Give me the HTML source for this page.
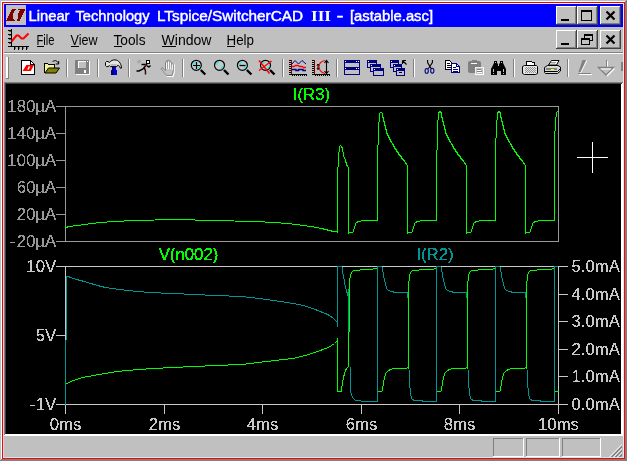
<!DOCTYPE html>
<html><head><meta charset="utf-8"><title>LTspice</title>
<style>
html,body{margin:0;padding:0;background:#C0C0C0;overflow:hidden}
svg{display:block;font-family:"Liberation Sans",sans-serif;will-change:transform}
</style></head><body>
<svg width="627" height="461" viewBox="0 0 627 461" shape-rendering="crispEdges">
<defs><filter id="na" x="-5%" y="-20%" width="110%" height="140%" color-interpolation-filters="sRGB"><feComponentTransfer><feFuncA type="discrete" tableValues="0 0 1 1 1"/></feComponentTransfer></filter><filter id="nb" x="-5%" y="-20%" width="110%" height="140%" color-interpolation-filters="sRGB"><feComponentTransfer><feFuncA type="discrete" tableValues="0 0 0 1 1 1 1 1 1 1"/></feComponentTransfer></filter></defs>
<rect x="0" y="0" width="627" height="461" fill="#C0C0C0"/>
<rect x="0" y="0" width="1" height="461" fill="#C0C0C0"/>
<rect x="0" y="0" width="627" height="1" fill="#C0C0C0"/>
<rect x="1" y="1" width="1" height="459" fill="#FFFFFF"/>
<rect x="1" y="1" width="625" height="1" fill="#FFFFFF"/>
<rect x="626" y="0" width="1" height="461" fill="#808080"/>
<rect x="0" y="460" width="627" height="1" fill="#808080"/>
<rect x="625" y="1" width="1" height="459" fill="#808080"/>
<rect x="1" y="459" width="625" height="1" fill="#808080"/>
<rect x="2" y="2" width="623" height="1" fill="#FF0000"/>
<rect x="2" y="458" width="623" height="1" fill="#FF0000"/>
<rect x="2" y="2" width="1" height="457" fill="#FF0000"/>
<rect x="624" y="2" width="1" height="457" fill="#FF0000"/>
<rect x="3" y="3" width="621" height="1" fill="#E8F0F0"/>
<rect x="3" y="3" width="1" height="455" fill="#D0DCDC"/>
<rect x="623" y="3" width="1" height="455" fill="#E8E8E8"/>
<rect x="3" y="457" width="621" height="1" fill="#E0E0E0"/>
<rect x="4" y="4" width="619" height="23" fill="#0000FF"/>
<rect x="6" y="5" width="20" height="20" fill="#C0C0C0"/>
<path d="M12.3,8.5 H16.3 L14.2,11.7 Q12.3,15 12.9,18.2 L14.4,19.5 L15.6,21.2 H5.8 Z" fill="#800000"/>
<path d="M17.9,8.5 H26 L19.5,21.2 H16.4 L18.3,18.2 Q17.4,15 18.7,12.6 L19.9,10.4 H17.9 Z" fill="#800000"/>
<text x="28.5" y="21" fill="#FFFFFF" font-size="14.5" font-weight="normal" textLength="41" lengthAdjust="spacingAndGlyphs" stroke="#FFFFFF" stroke-width="0.45">Linear</text>
<text x="75.5" y="21" fill="#FFFFFF" font-size="14.5" font-weight="normal" textLength="74" lengthAdjust="spacingAndGlyphs" stroke="#FFFFFF" stroke-width="0.45">Technology</text>
<text x="157" y="21" fill="#FFFFFF" font-size="14.5" font-weight="normal" textLength="146" lengthAdjust="spacingAndGlyphs" stroke="#FFFFFF" stroke-width="0.45">LTspice/SwitcherCAD</text>
<text x="336.5" y="21" fill="#FFFFFF" font-size="14.5" font-weight="normal" textLength="7" lengthAdjust="spacingAndGlyphs" stroke="#FFFFFF" stroke-width="0.45">-</text>
<text x="350" y="21" fill="#FFFFFF" font-size="14.5" font-weight="normal" textLength="83" lengthAdjust="spacingAndGlyphs" stroke="#FFFFFF" stroke-width="0.45">[astable.asc]</text>
<text x="311" y="21" fill="#FFFFFF" font-size="14.5" font-weight="bold" textLength="20" lengthAdjust="spacingAndGlyphs" font-family="Liberation Serif,serif">III</text>
<rect x="556" y="6" width="21" height="19" fill="#C0C0C0"/>
<rect x="556" y="6" width="20" height="1" fill="#FFFFFF"/>
<rect x="556" y="6" width="1" height="18" fill="#FFFFFF"/>
<rect x="556" y="24" width="21" height="1" fill="#404040"/>
<rect x="576" y="6" width="1" height="19" fill="#404040"/>
<rect x="557" y="23" width="19" height="1" fill="#808080"/>
<rect x="575" y="7" width="1" height="17" fill="#808080"/>
<rect x="561" y="19" width="8" height="2" fill="#000"/>
<rect x="577" y="6" width="21" height="19" fill="#C0C0C0"/>
<rect x="577" y="6" width="20" height="1" fill="#FFFFFF"/>
<rect x="577" y="6" width="1" height="18" fill="#FFFFFF"/>
<rect x="577" y="24" width="21" height="1" fill="#404040"/>
<rect x="597" y="6" width="1" height="19" fill="#404040"/>
<rect x="578" y="23" width="19" height="1" fill="#808080"/>
<rect x="596" y="7" width="1" height="17" fill="#808080"/>
<rect x="581" y="10" width="11" height="11" fill="#000"/>
<rect x="582" y="12" width="9" height="8" fill="#C0C0C0"/>
<rect x="600" y="6" width="21" height="19" fill="#C0C0C0"/>
<rect x="600" y="6" width="20" height="1" fill="#FFFFFF"/>
<rect x="600" y="6" width="1" height="18" fill="#FFFFFF"/>
<rect x="600" y="24" width="21" height="1" fill="#404040"/>
<rect x="620" y="6" width="1" height="19" fill="#404040"/>
<rect x="601" y="23" width="19" height="1" fill="#808080"/>
<rect x="619" y="7" width="1" height="17" fill="#808080"/>
<path d="M606.5,11.5 L614.5,19.5 M614.5,11.5 L606.5,19.5" stroke="#000" stroke-width="2.2" fill="none" shape-rendering="auto"/>
<rect x="556" y="30" width="21" height="19" fill="#C0C0C0"/>
<rect x="556" y="30" width="20" height="1" fill="#FFFFFF"/>
<rect x="556" y="30" width="1" height="18" fill="#FFFFFF"/>
<rect x="556" y="48" width="21" height="1" fill="#404040"/>
<rect x="576" y="30" width="1" height="19" fill="#404040"/>
<rect x="557" y="47" width="19" height="1" fill="#808080"/>
<rect x="575" y="31" width="1" height="17" fill="#808080"/>
<rect x="561" y="43" width="8" height="2" fill="#000"/>
<rect x="577" y="30" width="21" height="19" fill="#C0C0C0"/>
<rect x="577" y="30" width="20" height="1" fill="#FFFFFF"/>
<rect x="577" y="30" width="1" height="18" fill="#FFFFFF"/>
<rect x="577" y="48" width="21" height="1" fill="#404040"/>
<rect x="597" y="30" width="1" height="19" fill="#404040"/>
<rect x="578" y="47" width="19" height="1" fill="#808080"/>
<rect x="596" y="31" width="1" height="17" fill="#808080"/>
<rect x="584" y="34" width="9" height="7" fill="#000"/>
<rect x="585" y="36" width="7" height="4" fill="#C0C0C0"/>
<rect x="581" y="38" width="9" height="7" fill="#000"/>
<rect x="582" y="40" width="7" height="4" fill="#C0C0C0"/>
<rect x="600" y="30" width="21" height="19" fill="#C0C0C0"/>
<rect x="600" y="30" width="20" height="1" fill="#FFFFFF"/>
<rect x="600" y="30" width="1" height="18" fill="#FFFFFF"/>
<rect x="600" y="48" width="21" height="1" fill="#404040"/>
<rect x="620" y="30" width="1" height="19" fill="#404040"/>
<rect x="601" y="47" width="19" height="1" fill="#808080"/>
<rect x="619" y="31" width="1" height="17" fill="#808080"/>
<path d="M606.5,35.5 L614.5,43.5 M614.5,35.5 L606.5,43.5" stroke="#000" stroke-width="2.2" fill="none" shape-rendering="auto"/>
<rect x="8" y="30" width="3" height="1" fill="#000"/>
<rect x="9" y="31" width="2" height="1" fill="#606060"/>
<rect x="8" y="34" width="3" height="1" fill="#000"/>
<rect x="9" y="35" width="2" height="1" fill="#606060"/>
<rect x="8" y="38" width="3" height="1" fill="#000"/>
<rect x="9" y="39" width="2" height="1" fill="#606060"/>
<rect x="8" y="42" width="3" height="1" fill="#000"/>
<rect x="9" y="43" width="2" height="1" fill="#606060"/>
<rect x="11" y="29" width="1" height="18" fill="#000"/>
<rect x="8" y="46" width="21" height="1" fill="#000"/>
<rect x="14" y="47" width="1" height="3" fill="#000"/>
<rect x="15" y="47" width="1" height="2" fill="#707070"/>
<rect x="18" y="47" width="1" height="3" fill="#000"/>
<rect x="19" y="47" width="1" height="2" fill="#707070"/>
<rect x="22" y="47" width="1" height="3" fill="#000"/>
<rect x="23" y="47" width="1" height="2" fill="#707070"/>
<rect x="26" y="47" width="1" height="3" fill="#000"/>
<rect x="27" y="47" width="1" height="2" fill="#707070"/>
<polyline points="11.5,41.5 16.5,35.5 18.5,35.5 21.5,38.5 23.5,38.5 28.5,33.5" fill="none" stroke="#FF0000" stroke-width="2" shape-rendering="auto"/>
<text x="36.5" y="45" fill="#000" font-size="14.5" font-weight="normal" textLength="18" lengthAdjust="spacingAndGlyphs">File</text>
<rect x="37" y="46" width="7" height="1" fill="#000"/>
<text x="70.5" y="45" fill="#000" font-size="14.5" font-weight="normal" textLength="27" lengthAdjust="spacingAndGlyphs">View</text>
<rect x="71" y="46" width="8" height="1" fill="#000"/>
<text x="113.5" y="45" fill="#000" font-size="14.5" font-weight="normal" textLength="32" lengthAdjust="spacingAndGlyphs">Tools</text>
<rect x="114" y="46" width="8" height="1" fill="#000"/>
<text x="161.5" y="45" fill="#000" font-size="14.5" font-weight="normal" textLength="50" lengthAdjust="spacingAndGlyphs">Window</text>
<rect x="162" y="46" width="14" height="1" fill="#000"/>
<text x="226.5" y="45" fill="#000" font-size="14.5" font-weight="normal" textLength="27.5" lengthAdjust="spacingAndGlyphs">Help</text>
<rect x="227" y="46" width="8" height="1" fill="#000"/>
<rect x="4" y="52" width="619" height="1" fill="#808080"/>
<rect x="4" y="53" width="619" height="1" fill="#FFFFFF"/>
<rect x="6" y="57" width="1" height="21" fill="#FFFFFF"/>
<rect x="7" y="57" width="1" height="21" fill="#FFFFFF"/>
<rect x="8" y="57" width="1" height="22" fill="#808080"/>
<rect x="6" y="78" width="3" height="1" fill="#808080"/>
<rect x="66" y="59" width="1" height="18" fill="#808080"/>
<rect x="67" y="59" width="1" height="18" fill="#FFFFFF"/>
<rect x="97" y="59" width="1" height="18" fill="#808080"/>
<rect x="98" y="59" width="1" height="18" fill="#FFFFFF"/>
<rect x="128" y="59" width="1" height="18" fill="#808080"/>
<rect x="129" y="59" width="1" height="18" fill="#FFFFFF"/>
<rect x="182" y="59" width="1" height="18" fill="#808080"/>
<rect x="183" y="59" width="1" height="18" fill="#FFFFFF"/>
<rect x="282" y="59" width="1" height="18" fill="#808080"/>
<rect x="283" y="59" width="1" height="18" fill="#FFFFFF"/>
<rect x="336" y="59" width="1" height="18" fill="#808080"/>
<rect x="337" y="59" width="1" height="18" fill="#FFFFFF"/>
<rect x="413" y="59" width="1" height="18" fill="#808080"/>
<rect x="414" y="59" width="1" height="18" fill="#FFFFFF"/>
<rect x="513" y="59" width="1" height="18" fill="#808080"/>
<rect x="514" y="59" width="1" height="18" fill="#FFFFFF"/>
<rect x="567" y="59" width="1" height="18" fill="#808080"/>
<rect x="568" y="59" width="1" height="18" fill="#FFFFFF"/>
<path d="M21.5,60.5 H30.5 L34.5,64.5 V74.5 H21.5 Z" stroke="#000" stroke-width="1" fill="#FFF"/>
<path d="M30.5,60.5 V64.5 H34.5" stroke="#000" stroke-width="1" fill="none"/>
<path d="M26.3,65 H34 L30.8,71 H22.6 Z M28.6,66.6 L27.2,69.4 H28.8 L30.2,66.6 Z" fill="#FF0000" fill-rule="evenodd" shape-rendering="auto"/>
<path d="M44.5,72.5 V63.5 H47.5 L48.5,64.5 H54.5 V67.5" stroke="#000" stroke-width="1" fill="#F4F4A0"/>
<polygon points="45,73 56,73 59.5,68 48.5,68" fill="#808000" stroke="#000" stroke-width="1" shape-rendering="auto"/>
<path d="M52.5,62 C54,60 57,60 58.5,63.5 M58.7,61 V64 H55.7" stroke="#000" stroke-width="1" fill="none" shape-rendering="auto"/>
<rect x="76" y="61" width="14" height="14" fill="#FFF"/>
<rect x="75" y="60" width="14" height="14" fill="#808080"/>
<rect x="78" y="61" width="8" height="7" fill="#FFF"/>
<rect x="79" y="62" width="7" height="6" fill="#C0C0C0"/>
<rect x="84" y="70" width="2" height="3" fill="#FFF"/>
<rect x="87" y="61" width="1" height="1" fill="#FFF"/>
<path d="M105.5,62.5 L106.5,61.5 H108 L109.5,62.5 C111,60.4 113,59.9 115,59.9 C118.5,60 121,63 121.6,68 L120.3,68.2 C120,66.5 119,65.3 117.8,65.2 L116.8,66.6 H110.5 L109.5,65.6 L108,66.6 H106.5 L105.5,65.6 Z" fill="#E4E4E4" stroke="#000" stroke-width="1" shape-rendering="auto"/>
<path d="M110.5,65 H116.5" stroke="#909090" stroke-width="1" fill="none" shape-rendering="auto"/>
<rect x="112" y="67" width="2" height="4" fill="#000080"/>
<rect x="114" y="67" width="2" height="4" fill="#0000E0"/>
<rect x="111" y="70" width="3" height="5" fill="#000080"/>
<rect x="114" y="70" width="3" height="5" fill="#0000E0"/>
<rect x="146" y="60" width="4" height="4" fill="#000"/>
<rect x="147" y="61" width="2" height="2" fill="#FFF"/>
<path d="M147,64 L143,69 L139,71 H136.5 M144.5,68 L145.5,71 V74.5 M141.5,64.5 H145.5 M147,66 L149,67 L150.5,65.5" stroke="#000" stroke-width="1.4" fill="none" shape-rendering="auto"/>
<path d="M145.7,63.5 V66.5 M145.4,71.5 V73.5" stroke="#B00000" stroke-width="0.8" fill="none" shape-rendering="auto"/>
<path d="M137,61.5 L140,63 M138.5,60 L141,61.5" stroke="#909090" stroke-width="1" fill="none" shape-rendering="auto"/>
<path d="M166.5,75.5 L161.5,69.5 C160.5,68 162,67.3 163,68.3 L165.5,70.5 V62.5 C165.5,61 167.2,61 167.2,62.5 V61 C167.4,59.6 169.2,59.6 169.2,61 V61.8 C169.5,60.5 171.2,60.5 171.2,62 V63.5 C171.6,62.4 173.2,62.6 173.2,64 V71.5 L172,75.5 Z" transform="translate(1,1)" fill="none" stroke="#FFF" stroke-width="1.2" shape-rendering="auto"/>
<path d="M166.5,75.5 L161.5,69.5 C160.5,68 162,67.3 163,68.3 L165.5,70.5 V62.5 C165.5,61 167.2,61 167.2,62.5 V61 C167.4,59.6 169.2,59.6 169.2,61 V61.8 C169.5,60.5 171.2,60.5 171.2,62 V63.5 C171.6,62.4 173.2,62.6 173.2,64 V71.5 L172,75.5 Z" fill="#C0C0C0" stroke="#808080" stroke-width="1" shape-rendering="auto"/>
<path d="M166.6,62.5 V69 M168.5,61.5 V69 M170.4,62.5 V69 M172.3,64.5 V70" stroke="#FFF" stroke-width="1" fill="none" shape-rendering="auto"/>
<path d="M167.5,63 V68.5 M169.5,62.5 V68.5 M171.4,64 V68.5" stroke="#909090" stroke-width="0.7" fill="none" shape-rendering="auto"/>
<circle cx="196.3" cy="65.3" r="5" fill="#C8C8C8" stroke="#000" stroke-width="1.2" shape-rendering="auto"/>
<path d="M193.0,64.8 L195.3,62.099999999999994 M197.8,68.6 L199.8,66.1" stroke="#00FFFF" stroke-width="1.3" fill="none" shape-rendering="auto"/>
<path d="M200.8,70 L205.3,74.5" stroke="#000" stroke-width="2.4" fill="none" shape-rendering="auto"/>
<path d="M193,65.5 H200 M196.5,62 V69" stroke="#000" stroke-width="1.2" fill="none" shape-rendering="auto"/>
<circle cx="219.5" cy="65.3" r="5" fill="#C8C8C8" stroke="#000" stroke-width="1.2" shape-rendering="auto"/>
<path d="M216.2,64.8 L218.5,62.099999999999994 M221.0,68.6 L223.0,66.1" stroke="#00FFFF" stroke-width="1.3" fill="none" shape-rendering="auto"/>
<path d="M224.0,70 L228.5,74.5" stroke="#000" stroke-width="2.4" fill="none" shape-rendering="auto"/>
<circle cx="242.4" cy="65.3" r="5" fill="#C8C8C8" stroke="#000" stroke-width="1.2" shape-rendering="auto"/>
<path d="M239.1,64.8 L241.4,62.099999999999994 M243.9,68.6 L245.9,66.1" stroke="#00FFFF" stroke-width="1.3" fill="none" shape-rendering="auto"/>
<path d="M246.9,70 L251.4,74.5" stroke="#000" stroke-width="2.4" fill="none" shape-rendering="auto"/>
<path d="M239.5,65.5 H245.5" stroke="#000" stroke-width="1.3" fill="none" shape-rendering="auto"/>
<circle cx="265.5" cy="65.3" r="5" fill="#C8C8C8" stroke="#000" stroke-width="1.2" shape-rendering="auto"/>
<path d="M262.2,64.8 L264.5,62.099999999999994 M267.0,68.6 L269.0,66.1" stroke="#00FFFF" stroke-width="1.3" fill="none" shape-rendering="auto"/>
<path d="M270.0,70 L274.5,74.5" stroke="#000" stroke-width="2.4" fill="none" shape-rendering="auto"/>
<path d="M259,60.5 L269.5,73.5 M259,70.5 L271.5,61" stroke="#FF0000" stroke-width="1.5" fill="none" shape-rendering="auto"/>
<rect x="289" y="60" width="2" height="1" fill="#000"/>
<rect x="289" y="62" width="2" height="1" fill="#000"/>
<rect x="289" y="64" width="2" height="1" fill="#000"/>
<rect x="289" y="66" width="2" height="1" fill="#000"/>
<rect x="289" y="68" width="2" height="1" fill="#000"/>
<rect x="289" y="70" width="2" height="1" fill="#000"/>
<rect x="289" y="72" width="2" height="1" fill="#000"/>
<rect x="289" y="74" width="2" height="1" fill="#000"/>
<rect x="291" y="60" width="1" height="15" fill="#800000"/>
<rect x="292" y="74" width="1" height="2" fill="#000"/>
<rect x="294" y="74" width="1" height="2" fill="#000"/>
<rect x="296" y="74" width="1" height="2" fill="#000"/>
<rect x="298" y="74" width="1" height="2" fill="#000"/>
<rect x="300" y="74" width="1" height="2" fill="#000"/>
<rect x="302" y="74" width="1" height="2" fill="#000"/>
<rect x="304" y="74" width="1" height="2" fill="#000"/>
<rect x="306" y="74" width="1" height="2" fill="#000"/>
<rect x="291" y="74" width="16" height="1" fill="#000"/>
<path d="M292,64 L295,60.5 L298.5,64 L302,60.5 L306,64" stroke="#000080" stroke-width="1" fill="none" shape-rendering="auto"/>
<path d="M292,66.5 H294 L295.5,65.5 H298 L299.5,66.5 H302 L303.5,67.5 H306" stroke="#FF0000" stroke-width="1.4" fill="none" shape-rendering="auto"/>
<path d="M292,69.5 H296 V70.5 H298.5 V69.5 H303 V70.5 H306" stroke="#000080" stroke-width="1.4" fill="none" shape-rendering="auto"/>
<rect x="312" y="60" width="2" height="1" fill="#000"/>
<rect x="312" y="62" width="2" height="1" fill="#000"/>
<rect x="312" y="64" width="2" height="1" fill="#000"/>
<rect x="312" y="66" width="2" height="1" fill="#000"/>
<rect x="312" y="68" width="2" height="1" fill="#000"/>
<rect x="312" y="70" width="2" height="1" fill="#000"/>
<rect x="312" y="72" width="2" height="1" fill="#000"/>
<rect x="312" y="74" width="2" height="1" fill="#000"/>
<rect x="314" y="60" width="1" height="15" fill="#800000"/>
<rect x="315" y="74" width="1" height="2" fill="#000"/>
<rect x="317" y="74" width="1" height="2" fill="#000"/>
<rect x="319" y="74" width="1" height="2" fill="#000"/>
<rect x="321" y="74" width="1" height="2" fill="#000"/>
<rect x="323" y="74" width="1" height="2" fill="#000"/>
<rect x="325" y="74" width="1" height="2" fill="#000"/>
<rect x="327" y="74" width="1" height="2" fill="#000"/>
<rect x="329" y="74" width="1" height="2" fill="#000"/>
<rect x="314" y="74" width="16" height="1" fill="#000"/>
<path d="M325,60.5 C320,61.5 319,64 319,66.5 C319,69.5 320,72 325,73.5" stroke="#FF0000" stroke-width="1.2" fill="none" shape-rendering="auto"/>
<path d="M326.5,60.5 V73.5 M324.5,63 L326.5,60.5 L328.5,63 M324.5,71 L326.5,73.5 L328.5,71" stroke="#000" stroke-width="1.1" fill="none" shape-rendering="auto"/>
<path d="M318,64 V69.5 M317,65.5 L318,64 L319,65.5 M317,68 L318,69.5 L319,68" stroke="#000" stroke-width="1" fill="none" shape-rendering="auto"/>
<rect x="344" y="60" width="16" height="8" fill="#000080"/>
<rect x="345" y="63" width="14" height="4" fill="#C0C0C0"/>
<rect x="345" y="61" width="1" height="1" fill="#FFF"/>
<rect x="358" y="61" width="1" height="1" fill="#FFF"/>
<rect x="356" y="61" width="1" height="1" fill="#FFF"/>
<rect x="344" y="67" width="16" height="8" fill="#000080"/>
<rect x="345" y="70" width="14" height="4" fill="#C0C0C0"/>
<rect x="345" y="68" width="1" height="1" fill="#FFF"/>
<rect x="358" y="68" width="1" height="1" fill="#FFF"/>
<rect x="356" y="68" width="1" height="1" fill="#FFF"/>
<rect x="367" y="60" width="10" height="8" fill="#000080"/>
<rect x="368" y="63" width="8" height="4" fill="#C0C0C0"/>
<rect x="370" y="64" width="11" height="8" fill="#000080"/>
<rect x="371" y="67" width="9" height="4" fill="#C0C0C0"/>
<rect x="373" y="68" width="11" height="8" fill="#000080"/>
<rect x="374" y="71" width="9" height="4" fill="#C0C0C0"/>
<rect x="368" y="61" width="1" height="1" fill="#FFF"/>
<rect x="371" y="65" width="1" height="1" fill="#FFF"/>
<rect x="374" y="69" width="1" height="1" fill="#FFF"/>
<rect x="390" y="60" width="9" height="8" fill="#000080"/>
<rect x="391" y="63" width="7" height="4" fill="#C0C0C0"/>
<rect x="393" y="64" width="9" height="8" fill="#000080"/>
<rect x="394" y="67" width="7" height="4" fill="#C0C0C0"/>
<rect x="396" y="68" width="9" height="8" fill="#000080"/>
<rect x="397" y="71" width="7" height="4" fill="#C0C0C0"/>
<rect x="391" y="61" width="1" height="1" fill="#FFF"/>
<rect x="394" y="65" width="1" height="1" fill="#FFF"/>
<rect x="397" y="69" width="1" height="1" fill="#FFF"/>
<rect x="399" y="72" width="3" height="1" fill="#000"/>
<path d="M402.5,60.5 H406 M402.5,60.5 V64 M402.5,60.5 L406.5,64.5" stroke="#000" stroke-width="1.2" fill="none" shape-rendering="auto"/>
<path d="M427.6,60 V62.5 L431.3,68.8 M432.4,60 V62.5 L428.3,68.8" stroke="#000" stroke-width="1.1" fill="none" shape-rendering="auto"/>
<ellipse cx="426.7" cy="70.9" rx="1.6" ry="2.4" fill="none" stroke="#000080" stroke-width="1.1" shape-rendering="auto"/>
<ellipse cx="432.3" cy="70.7" rx="1.6" ry="2.4" fill="none" stroke="#000080" stroke-width="1.1" shape-rendering="auto"/>
<path d="M445.5,60.5 H449.5 L452.5,63.5 V69.5 H445.5 Z" stroke="#000" stroke-width="1" fill="#FFF"/>
<rect x="447" y="63" width="3" height="1" fill="#000"/>
<rect x="447" y="65" width="4" height="1" fill="#000"/>
<rect x="447" y="67" width="4" height="1" fill="#000"/>
<path d="M451.5,63.5 H456.5 L459.5,66.5 V72.5 H451.5 Z" stroke="#000080" stroke-width="1" fill="#FFF"/>
<path d="M456.5,63.5 V66.5 H459.5" stroke="#000080" stroke-width="1" fill="none"/>
<rect x="453" y="67" width="3" height="1" fill="#000080"/>
<rect x="453" y="69" width="5" height="1" fill="#000080"/>
<rect x="453" y="71" width="5" height="1" fill="#000080"/>
<rect x="468" y="61" width="13" height="12" rx="2" fill="#808080" shape-rendering="auto"/>
<rect x="472" y="60" width="5" height="2" fill="#808080"/>
<rect x="471" y="63" width="6" height="1" fill="#FFF"/>
<rect x="475" y="67" width="9" height="8" fill="#C0C0C0"/>
<rect x="483" y="67" width="1" height="8" fill="#FFF"/>
<rect x="475" y="74" width="9" height="1" fill="#FFF"/>
<rect x="475" y="67" width="8" height="1" fill="#F0F0F0"/>
<rect x="475" y="67" width="1" height="7" fill="#F0F0F0"/>
<rect x="477" y="69" width="4" height="1" fill="#808080"/>
<rect x="477" y="70" width="4" height="1" fill="#FFF"/>
<rect x="477" y="71" width="5" height="1" fill="#808080"/>
<rect x="477" y="72" width="5" height="1" fill="#FFF"/>
<path d="M494,61 H497 V63 L498,64 V66 H499 V64 L500,63 V61 H503 V63 L506,69 V75 H501 V71 H497 V75 H491 V69 L494,63 Z" fill="#000" shape-rendering="auto"/>
<rect x="495" y="62" width="1" height="1" fill="#C0C0C0"/>
<rect x="501" y="62" width="1" height="1" fill="#C0C0C0"/>
<rect x="493" y="69" width="1" height="3" fill="#C0C0C0"/>
<rect x="503" y="69" width="1" height="3" fill="#C0C0C0"/>
<rect x="493" y="73" width="1" height="1" fill="#C0C0C0"/>
<rect x="503" y="73" width="1" height="1" fill="#C0C0C0"/>
<path d="M526.5,65.5 V61.5 H531 L533,62.5 H534.5 V65.5" fill="#FFF" stroke="#000" stroke-width="1"/>
<path d="M522.5,66.5 L524.5,65.5 H536.5 L537.5,66.5 V73.5 L535.5,74.5 H524.5 L522.5,73.5 Z" fill="#E4E4E4" stroke="#000" stroke-width="1" shape-rendering="auto"/>
<rect x="526" y="67" width="1" height="1" fill="#909090"/>
<rect x="528" y="67" width="1" height="1" fill="#909090"/>
<rect x="530" y="67" width="1" height="1" fill="#909090"/>
<rect x="532" y="67" width="1" height="1" fill="#909090"/>
<rect x="534" y="67" width="1" height="1" fill="#909090"/>
<rect x="525" y="68" width="1" height="1" fill="#909090"/>
<rect x="527" y="68" width="1" height="1" fill="#909090"/>
<rect x="529" y="68" width="1" height="1" fill="#909090"/>
<rect x="531" y="68" width="1" height="1" fill="#909090"/>
<rect x="533" y="68" width="1" height="1" fill="#909090"/>
<rect x="535" y="68" width="1" height="1" fill="#909090"/>
<rect x="526" y="69" width="1" height="1" fill="#909090"/>
<rect x="528" y="69" width="1" height="1" fill="#909090"/>
<rect x="530" y="69" width="1" height="1" fill="#909090"/>
<rect x="532" y="69" width="1" height="1" fill="#909090"/>
<rect x="534" y="69" width="1" height="1" fill="#909090"/>
<rect x="525" y="70" width="1" height="1" fill="#909090"/>
<rect x="527" y="70" width="1" height="1" fill="#909090"/>
<rect x="529" y="70" width="1" height="1" fill="#909090"/>
<rect x="531" y="70" width="1" height="1" fill="#909090"/>
<rect x="533" y="70" width="1" height="1" fill="#909090"/>
<rect x="535" y="70" width="1" height="1" fill="#909090"/>
<rect x="526" y="71" width="1" height="1" fill="#909090"/>
<rect x="528" y="71" width="1" height="1" fill="#909090"/>
<rect x="530" y="71" width="1" height="1" fill="#909090"/>
<rect x="532" y="71" width="1" height="1" fill="#909090"/>
<rect x="534" y="71" width="1" height="1" fill="#909090"/>
<rect x="525" y="72" width="1" height="1" fill="#909090"/>
<rect x="527" y="72" width="1" height="1" fill="#909090"/>
<rect x="529" y="72" width="1" height="1" fill="#909090"/>
<rect x="531" y="72" width="1" height="1" fill="#909090"/>
<rect x="533" y="72" width="1" height="1" fill="#909090"/>
<rect x="535" y="72" width="1" height="1" fill="#909090"/>
<polygon points="548.5,65 551.5,60.5 559,60.5 556.5,65" fill="#FFF" stroke="#000" stroke-width="1" shape-rendering="auto"/>
<path d="M551,62.5 H556 M550,64 H555" stroke="#808080" stroke-width="0.8" fill="none" shape-rendering="auto"/>
<path d="M544.5,67.5 L547.5,65.5 H558 L560.5,67 V71 L557.5,73.5 H545.5 L544.5,72.5 Z" fill="#D8D8D8" stroke="#000" stroke-width="1" shape-rendering="auto"/>
<rect x="546" y="68" width="11" height="2" fill="#808080"/>
<rect x="551" y="69" width="3" height="1" fill="#FFFF00"/>
<path d="M545,71.5 H557.5 L560,69" stroke="#000" stroke-width="1" fill="none" shape-rendering="auto"/>
<polygon points="578.5,72 582.5,60 586,60 581,72" fill="#808080" shape-rendering="auto"/>
<path d="M580,74.2 L586.8,60.5" stroke="#FFF" stroke-width="1" fill="none" shape-rendering="auto"/>
<rect x="578" y="73" width="13" height="1" fill="#808080"/>
<rect x="579" y="74" width="13" height="1" fill="#FFF"/>
<rect x="606" y="60" width="1" height="7" fill="#808080"/>
<rect x="607" y="61" width="1" height="6" fill="#FFF"/>
<polygon points="598.5,67.5 613.5,67.5 606,75" fill="none" stroke="#808080" stroke-width="1.3" shape-rendering="auto"/>
<path d="M607,76 L614.5,68.5" stroke="#FFF" stroke-width="1.2" fill="none" shape-rendering="auto"/>
<path d="M600.5,69 H611" stroke="#FFF" stroke-width="1" fill="none" shape-rendering="auto"/>
<rect x="621" y="62" width="2" height="9" fill="#808080"/>
<rect x="4" y="82" width="619" height="1" fill="#808080"/>
<rect x="4" y="82" width="1" height="354" fill="#808080"/>
<rect x="5" y="83" width="617" height="1" fill="#404040"/>
<rect x="5" y="83" width="1" height="352" fill="#404040"/>
<rect x="6" y="84" width="615" height="350" fill="#000"/>
<rect x="5" y="434" width="618" height="1" fill="#FFFFFF"/>
<rect x="4" y="435" width="619" height="1" fill="#FFFFFF"/>
<rect x="621" y="84" width="1" height="351" fill="#FFFFFF"/>
<rect x="622" y="83" width="1" height="353" fill="#FFFFFF"/>
<rect x="56" y="106" width="9" height="1" fill="#989898"/>
<text x="56.2" y="112" fill="#989898" font-size="16.8" text-anchor="end" font-weight="normal" filter="url(#na)">180µA</text>
<rect x="56" y="133" width="9" height="1" fill="#989898"/>
<text x="56.2" y="139" fill="#989898" font-size="16.8" text-anchor="end" font-weight="normal" filter="url(#na)">140µA</text>
<rect x="56" y="160" width="9" height="1" fill="#989898"/>
<text x="56.2" y="166" fill="#989898" font-size="16.8" text-anchor="end" font-weight="normal" filter="url(#na)">100µA</text>
<rect x="56" y="187" width="9" height="1" fill="#989898"/>
<text x="56.2" y="193" fill="#989898" font-size="16.8" text-anchor="end" font-weight="normal" filter="url(#na)">60µA</text>
<rect x="56" y="214" width="9" height="1" fill="#989898"/>
<text x="56.2" y="220" fill="#989898" font-size="16.8" text-anchor="end" font-weight="normal" filter="url(#na)">20µA</text>
<rect x="56" y="241" width="9" height="1" fill="#989898"/>
<text x="56.2" y="247" fill="#989898" font-size="16.8" text-anchor="end" font-weight="normal" filter="url(#na)">20µA</text>
<rect x="65" y="106" width="494" height="1" fill="#989898"/>
<rect x="65" y="241" width="494" height="1" fill="#989898"/>
<rect x="65" y="106" width="1" height="136" fill="#989898"/>
<rect x="558" y="106" width="1" height="136" fill="#989898"/>
<text x="9.6" y="247" fill="#989898" font-size="16.8" font-weight="normal" textLength="6.4" lengthAdjust="spacingAndGlyphs" filter="url(#na)">-</text>
<text x="311.5" y="100" fill="#00FF00" font-size="16.8" text-anchor="middle" font-weight="normal" filter="url(#nb)">I(R3)</text>
<rect x="56" y="266" width="9" height="1" fill="#C8C8C8"/>
<text x="56.2" y="272" fill="#C8C8C8" font-size="16.8" text-anchor="end" font-weight="normal" filter="url(#na)">10V</text>
<rect x="56" y="335" width="9" height="1" fill="#C8C8C8"/>
<text x="56.2" y="341" fill="#C8C8C8" font-size="16.8" text-anchor="end" font-weight="normal" filter="url(#na)">5V</text>
<rect x="56" y="404" width="9" height="1" fill="#C8C8C8"/>
<text x="56.2" y="410" fill="#C8C8C8" font-size="16.8" text-anchor="end" font-weight="normal" filter="url(#na)">1V</text>
<rect x="559" y="266" width="9" height="1" fill="#C8C8C8"/>
<text x="571.4" y="272" fill="#C8C8C8" font-size="16.8" text-anchor="start" font-weight="normal" filter="url(#na)">5.0mA</text>
<rect x="559" y="294" width="9" height="1" fill="#C8C8C8"/>
<text x="571.4" y="300" fill="#C8C8C8" font-size="16.8" text-anchor="start" font-weight="normal" filter="url(#na)">4.0mA</text>
<rect x="559" y="321" width="9" height="1" fill="#C8C8C8"/>
<text x="571.4" y="327" fill="#C8C8C8" font-size="16.8" text-anchor="start" font-weight="normal" filter="url(#na)">3.0mA</text>
<rect x="559" y="349" width="9" height="1" fill="#C8C8C8"/>
<text x="571.4" y="355" fill="#C8C8C8" font-size="16.8" text-anchor="start" font-weight="normal" filter="url(#na)">2.0mA</text>
<rect x="559" y="376" width="9" height="1" fill="#C8C8C8"/>
<text x="571.4" y="382" fill="#C8C8C8" font-size="16.8" text-anchor="start" font-weight="normal" filter="url(#na)">1.0mA</text>
<rect x="559" y="404" width="9" height="1" fill="#C8C8C8"/>
<text x="571.4" y="410" fill="#C8C8C8" font-size="16.8" text-anchor="start" font-weight="normal" filter="url(#na)">0.0mA</text>
<rect x="65" y="266" width="494" height="1" fill="#C8C8C8"/>
<rect x="65" y="404" width="494" height="1" fill="#C8C8C8"/>
<rect x="65" y="266" width="1" height="139" fill="#C8C8C8"/>
<rect x="558" y="266" width="1" height="139" fill="#C8C8C8"/>
<rect x="65" y="405" width="1" height="9" fill="#C8C8C8"/>
<text x="65.5" y="430" fill="#C8C8C8" font-size="16.8" text-anchor="middle" font-weight="normal" filter="url(#na)">0ms</text>
<rect x="164" y="405" width="1" height="9" fill="#C8C8C8"/>
<text x="164.5" y="430" fill="#C8C8C8" font-size="16.8" text-anchor="middle" font-weight="normal" filter="url(#na)">2ms</text>
<rect x="262" y="405" width="1" height="9" fill="#C8C8C8"/>
<text x="262.5" y="430" fill="#C8C8C8" font-size="16.8" text-anchor="middle" font-weight="normal" filter="url(#na)">4ms</text>
<rect x="361" y="405" width="1" height="9" fill="#C8C8C8"/>
<text x="361.5" y="430" fill="#C8C8C8" font-size="16.8" text-anchor="middle" font-weight="normal" filter="url(#na)">6ms</text>
<rect x="459" y="405" width="1" height="9" fill="#C8C8C8"/>
<text x="459.5" y="430" fill="#C8C8C8" font-size="16.8" text-anchor="middle" font-weight="normal" filter="url(#na)">8ms</text>
<rect x="558" y="405" width="1" height="9" fill="#C8C8C8"/>
<text x="558.5" y="430" fill="#C8C8C8" font-size="16.8" text-anchor="middle" font-weight="normal" filter="url(#na)">10ms</text>
<text x="29.6" y="410" fill="#C8C8C8" font-size="16.8" font-weight="normal" textLength="6.4" lengthAdjust="spacingAndGlyphs" filter="url(#na)">-</text>
<text x="188.5" y="260" fill="#00FF00" font-size="16.8" text-anchor="middle" font-weight="normal" filter="url(#nb)">V(n002)</text>
<text x="435" y="260" fill="#009696" font-size="16.8" text-anchor="middle" font-weight="normal" filter="url(#nb)">I(R2)</text>
<rect x="577" y="157" width="31" height="1" fill="#FFFFFF"/>
<rect x="592" y="142" width="1" height="31" fill="#FFFFFF"/>
<polyline points="65.5,227.5 69.5,226.5 77.5,225.5 84.5,224.5 91.5,223.5 100.5,222.5 114.5,221.5 133.5,220.5 176.5,219.5 212.5,220.5 255.5,221.5 274.5,222.5 287.5,223.5 295.5,224.5 303.5,225.5 310.5,226.5 316.5,227.5 321.5,228.5 325.5,229.5 329.5,230.5 333.5,231.5 336.5,231.5 337.5,232.5 337.5,167.5 338.5,166.5 338.5,152.5 339.5,151.5 339.5,146.5 340.5,145.5 341.5,146.5 342.5,148.5 342.5,151.5 343.5,152.5 343.5,156.5 344.5,157.5 345.5,160.5 346.5,164.5 347.5,166.5 348.5,167.5 348.5,233.5 349.5,232.5 352.5,232.5 353.5,231.5 353.5,229.5 354.5,228.5 354.5,226.5 355.5,225.5 355.5,223.5 356.5,222.5 358.5,221.5 360.5,221.5 361.5,220.5 377.5,220.5 377.5,220.5 377.5,145.5 378.5,144.5 378.5,122.5 379.5,121.5 379.5,113.5 380.5,112.5 381.5,112.5 382.5,113.5 382.5,117.5 383.5,117.5 383.5,121.5 384.5,121.5 384.5,125.5 385.5,125.5 385.5,129.5 386.5,129.5 386.5,133.5 387.5,133.5 387.5,135.5 388.5,135.5 388.5,137.5 389.5,137.5 389.5,139.5 390.5,139.5 390.5,141.5 391.5,141.5 391.5,142.5 392.5,143.5 392.5,144.5 393.5,144.5 393.5,146.5 394.5,146.5 394.5,148.5 395.5,148.5 395.5,149.5 396.5,149.5 396.5,151.5 397.5,151.5 397.5,152.5 398.5,152.5 398.5,154.5 399.5,154.5 399.5,155.5 400.5,155.5 400.5,156.5 401.5,156.5 401.5,158.5 402.5,158.5 402.5,159.5 403.5,159.5 403.5,160.5 404.5,160.5 404.5,161.5 405.5,162.5 405.5,163.5 406.5,163.5 406.5,164.5 407.5,165.5 407.5,233.5 408.5,232.5 411.5,232.5 412.5,231.5 412.5,229.5 413.5,228.5 413.5,226.5 414.5,225.5 414.5,223.5 415.5,222.5 417.5,221.5 419.5,221.5 420.5,220.5 436.5,220.5 436.5,220.5 436.5,150.5 437.5,149.5 437.5,120.5 438.5,119.5 438.5,113.5 439.5,111.5 440.5,111.5 441.5,113.5 441.5,117.5 442.5,117.5 442.5,121.5 443.5,121.5 443.5,125.5 444.5,125.5 444.5,129.5 445.5,129.5 445.5,133.5 446.5,133.5 446.5,135.5 447.5,135.5 447.5,137.5 448.5,137.5 448.5,139.5 449.5,139.5 449.5,141.5 450.5,141.5 450.5,142.5 451.5,143.5 451.5,144.5 452.5,144.5 452.5,146.5 453.5,146.5 453.5,148.5 454.5,148.5 454.5,149.5 455.5,149.5 455.5,151.5 456.5,151.5 456.5,152.5 457.5,152.5 457.5,154.5 458.5,154.5 458.5,155.5 459.5,155.5 459.5,156.5 460.5,156.5 460.5,158.5 461.5,158.5 461.5,159.5 462.5,159.5 462.5,160.5 463.5,160.5 463.5,161.5 464.5,162.5 464.5,163.5 465.5,163.5 465.5,164.5 466.5,165.5 466.5,233.5 467.5,232.5 470.5,232.5 471.5,231.5 471.5,229.5 472.5,228.5 472.5,226.5 473.5,225.5 473.5,223.5 474.5,222.5 476.5,221.5 478.5,221.5 479.5,220.5 495.5,220.5 495.5,220.5 495.5,138.5 496.5,137.5 496.5,120.5 497.5,119.5 497.5,113.5 498.5,111.5 499.5,111.5 500.5,113.5 500.5,117.5 501.5,117.5 501.5,121.5 502.5,121.5 502.5,125.5 503.5,125.5 503.5,129.5 504.5,129.5 504.5,133.5 505.5,133.5 505.5,135.5 506.5,135.5 506.5,137.5 507.5,137.5 507.5,139.5 508.5,139.5 508.5,141.5 509.5,141.5 509.5,142.5 510.5,143.5 510.5,144.5 511.5,144.5 511.5,146.5 512.5,146.5 512.5,148.5 513.5,148.5 513.5,149.5 514.5,149.5 514.5,151.5 515.5,151.5 515.5,152.5 516.5,152.5 516.5,154.5 517.5,154.5 517.5,155.5 518.5,155.5 518.5,156.5 519.5,156.5 519.5,158.5 520.5,158.5 520.5,159.5 521.5,159.5 521.5,160.5 522.5,160.5 522.5,161.5 523.5,162.5 523.5,163.5 524.5,163.5 524.5,164.5 525.5,165.5 525.5,233.5 526.5,232.5 529.5,232.5 530.5,231.5 530.5,229.5 531.5,228.5 531.5,226.5 532.5,225.5 532.5,223.5 533.5,222.5 535.5,221.5 537.5,221.5 538.5,220.5 554.5,220.5 554.5,220.5 554.5,131.5 555.5,130.5 555.5,117.5 556.5,116.5 556.5,112.5 557.5,111.5" fill="none" stroke="#00FF00" stroke-width="1"/>
<polyline points="65.5,384.5 66.5,383.5 73.5,380.5 82.5,377.5 93.5,375.5 105.5,373.5 116.5,371.5 127.5,370.5 138.5,369.5 154.5,368.5 172.5,367.5 194.5,366.5 215.5,365.5 241.5,364.5 266.5,361.5 292.5,358.5 305.5,355.5 317.5,351.5 328.5,347.5 334.5,343.5 337.5,340.5 337.5,337.5 337.5,391.5 341.5,391.5 341.5,389.5 342.5,383.5 343.5,377.5 344.5,373.5 345.5,370.5 346.5,368.5 347.5,367.5 348.5,366.5 348.5,332.5 349.5,331.5 349.5,278.5 350.5,277.5 350.5,274.5 351.5,273.5 351.5,272.5 352.5,271.5 353.5,270.5 359.5,270.5 360.5,269.5 372.5,269.5 373.5,268.5 376.5,268.5 377.5,268.5 377.5,391.5 381.5,391.5 382.5,390.5 382.5,386.5 383.5,385.5 383.5,380.5 384.5,379.5 384.5,376.5 385.5,375.5 385.5,373.5 386.5,372.5 387.5,371.5 388.5,370.5 390.5,369.5 393.5,368.5 406.5,368.5 407.5,367.5 408.5,368.5 408.5,281.5 409.5,280.5 409.5,274.5 410.5,273.5 410.5,272.5 411.5,271.5 412.5,270.5 418.5,270.5 419.5,269.5 433.5,269.5 434.5,268.5 436.5,268.5 436.5,268.5 436.5,391.5 440.5,391.5 441.5,390.5 441.5,386.5 442.5,385.5 442.5,380.5 443.5,379.5 443.5,376.5 444.5,375.5 444.5,373.5 445.5,372.5 446.5,371.5 447.5,370.5 449.5,369.5 452.5,368.5 465.5,368.5 466.5,367.5 467.5,368.5 467.5,281.5 468.5,280.5 468.5,274.5 469.5,273.5 469.5,272.5 470.5,271.5 471.5,270.5 477.5,270.5 478.5,269.5 492.5,269.5 493.5,268.5 495.5,268.5 495.5,268.5 495.5,391.5 499.5,391.5 500.5,390.5 500.5,386.5 501.5,385.5 501.5,380.5 502.5,379.5 502.5,376.5 503.5,375.5 503.5,373.5 504.5,372.5 505.5,371.5 506.5,370.5 508.5,369.5 511.5,368.5 524.5,368.5 525.5,367.5 526.5,368.5 526.5,281.5 527.5,280.5 527.5,274.5 528.5,273.5 528.5,272.5 529.5,271.5 530.5,270.5 536.5,270.5 537.5,269.5 551.5,269.5 552.5,268.5 554.5,268.5 554.5,268.5 554.5,391.5 558.5,391.5" fill="none" stroke="#00FF00" stroke-width="1"/>
<polyline points="65.5,404.5 65.5,340.5 66.5,339.5 66.5,276.5 68.5,276.5 70.5,277.5 73.5,278.5 76.5,279.5 80.5,280.5 84.5,281.5 87.5,282.5 90.5,283.5 94.5,284.5 97.5,285.5 101.5,286.5 105.5,287.5 112.5,288.5 119.5,289.5 127.5,290.5 138.5,291.5 149.5,292.5 172.5,293.5 194.5,294.5 215.5,295.5 241.5,296.5 250.5,297.5 258.5,298.5 266.5,299.5 273.5,300.5 280.5,301.5 286.5,302.5 292.5,303.5 298.5,304.5 303.5,305.5 306.5,306.5 309.5,307.5 312.5,308.5 315.5,309.5 317.5,310.5 320.5,311.5 322.5,312.5 325.5,313.5 327.5,314.5 329.5,315.5 330.5,316.5 332.5,317.5 333.5,318.5 334.5,319.5 335.5,320.5 336.5,321.5 337.5,322.5 337.5,326.5" fill="none" stroke="#009696" stroke-width="1"/>
<polyline points="337.5,326.5 337.5,266.5 341.5,266.5 342.5,267.5 342.5,273.5 343.5,274.5 343.5,278.5 344.5,279.5 344.5,284.5 345.5,285.5 345.5,288.5 346.5,289.5 346.5,292.5 347.5,293.5 347.5,295.5 348.5,289.5 348.5,331.5" fill="none" stroke="#009696" stroke-width="1"/>
<polyline points="350.5,366.5 350.5,392.5 351.5,393.5 351.5,395.5 352.5,396.5 352.5,397.5 353.5,398.5 354.5,399.5 355.5,400.5 360.5,400.5 361.5,401.5 377.5,401.5" fill="none" stroke="#009696" stroke-width="1"/>
<polyline points="377.5,401.5 377.5,266.5 381.5,266.5 382.5,267.5 382.5,271.5 383.5,272.5 383.5,277.5 384.5,278.5 384.5,281.5 385.5,282.5 385.5,285.5 386.5,286.5 386.5,288.5 387.5,289.5 388.5,290.5 391.5,291.5 395.5,292.5 407.5,292.5 407.5,297.5" fill="none" stroke="#009696" stroke-width="1"/>
<polyline points="409.5,369.5 409.5,387.5 410.5,388.5 410.5,395.5 411.5,396.5 411.5,398.5 412.5,399.5 414.5,400.5 421.5,400.5 423.5,401.5 436.5,401.5" fill="none" stroke="#009696" stroke-width="1"/>
<polyline points="436.5,401.5 436.5,266.5 440.5,266.5 441.5,267.5 441.5,271.5 442.5,272.5 442.5,277.5 443.5,278.5 443.5,281.5 444.5,282.5 444.5,285.5 445.5,286.5 445.5,288.5 446.5,289.5 447.5,290.5 450.5,291.5 454.5,292.5 466.5,292.5 466.5,297.5" fill="none" stroke="#009696" stroke-width="1"/>
<polyline points="468.5,369.5 468.5,387.5 469.5,388.5 469.5,395.5 470.5,396.5 470.5,398.5 471.5,399.5 473.5,400.5 480.5,400.5 482.5,401.5 495.5,401.5" fill="none" stroke="#009696" stroke-width="1"/>
<polyline points="495.5,401.5 495.5,266.5 499.5,266.5 500.5,267.5 500.5,271.5 501.5,272.5 501.5,277.5 502.5,278.5 502.5,281.5 503.5,282.5 503.5,285.5 504.5,286.5 504.5,288.5 505.5,289.5 506.5,290.5 509.5,291.5 513.5,292.5 525.5,292.5 525.5,297.5" fill="none" stroke="#009696" stroke-width="1"/>
<polyline points="527.5,369.5 527.5,387.5 528.5,388.5 528.5,395.5 529.5,396.5 529.5,398.5 530.5,399.5 532.5,400.5 539.5,400.5 541.5,401.5 554.5,401.5" fill="none" stroke="#009696" stroke-width="1"/>
<polyline points="554.5,401.5 554.5,266.5 557.5,266.5" fill="none" stroke="#009696" stroke-width="1"/>
<rect x="493" y="438" width="30" height="1" fill="#808080"/>
<rect x="493" y="438" width="1" height="18" fill="#808080"/>
<rect x="493" y="456" width="31" height="1" fill="#FFFFFF"/>
<rect x="523" y="438" width="1" height="19" fill="#FFFFFF"/>
<rect x="526" y="438" width="33" height="1" fill="#808080"/>
<rect x="526" y="438" width="1" height="18" fill="#808080"/>
<rect x="526" y="456" width="34" height="1" fill="#FFFFFF"/>
<rect x="559" y="438" width="1" height="19" fill="#FFFFFF"/>
<rect x="562" y="438" width="38" height="1" fill="#808080"/>
<rect x="562" y="438" width="1" height="18" fill="#808080"/>
<rect x="562" y="456" width="39" height="1" fill="#FFFFFF"/>
<rect x="600" y="438" width="1" height="19" fill="#FFFFFF"/>
<clipPath id="gc"><rect x="608" y="443" width="14" height="14"/></clipPath><g clip-path="url(#gc)" shape-rendering="auto">
<path d="M609.5,457.5 L623.5,443.5" stroke="#FFFFFF" stroke-width="1.3"/>
<path d="M611,457.5 L623.5,445" stroke="#808080" stroke-width="1.7"/>
<path d="M613.5,457.5 L623.5,447.5" stroke="#FFFFFF" stroke-width="1.3"/>
<path d="M615,457.5 L623.5,449" stroke="#808080" stroke-width="1.7"/>
<path d="M617.5,457.5 L623.5,451.5" stroke="#FFFFFF" stroke-width="1.3"/>
<path d="M619,457.5 L623.5,453" stroke="#808080" stroke-width="1.7"/>
</g>
</svg>
</body></html>
